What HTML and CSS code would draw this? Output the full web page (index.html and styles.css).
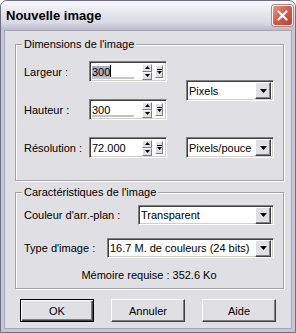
FILE: index.html
```html
<!DOCTYPE html>
<html lang="fr">
<head>
  <meta charset="UTF-8">
  <title>Nouvelle image</title>
  <link rel="stylesheet" href="styles.css">
</head>
<body>
  <div class="window">
    <div class="titlebar">
      <span class="title">Nouvelle image</span>
      <button class="close" aria-label="Fermer">
        <svg width="11" height="11" viewBox="0 0 11 11"><path d="M1.5 1.5 L9.5 9.5 M9.5 1.5 L1.5 9.5" stroke="#fff" stroke-width="2.2" stroke-linecap="round"/></svg>
      </button>
    </div>

    <div class="client">
      <fieldset class="group">
        <legend>Dimensions de l'image</legend>
        <div class="dims">
          <label class="lbl row1">Largeur :</label>
          <div class="spin-field row1">
            <span class="value"><span class="sel">300</span><span class="caret"></span></span>
            <span class="spin">
              <span class="spin-btn"><svg width="5" height="3" viewBox="0 0 5 3"><path d="M2.5 0 L5 3 L0 3 Z"/></svg></span>
              <span class="spin-btn"><svg width="5" height="3" viewBox="0 0 5 3"><path d="M0 0 L5 0 L2.5 3 Z"/></svg></span>
            </span>
            <span class="popup-btn"><svg width="5" height="6" viewBox="0 0 5 6"><path d="M0 0 H5 V1 H0 Z M0 2 H5 L2.5 5 Z"/></svg></span>
            <span class="track"></span>
          </div>

          <label class="lbl row2">Hauteur :</label>
          <div class="spin-field row2">
            <span class="value">300</span>
            <span class="spin">
              <span class="spin-btn"><svg width="5" height="3" viewBox="0 0 5 3"><path d="M2.5 0 L5 3 L0 3 Z"/></svg></span>
              <span class="spin-btn"><svg width="5" height="3" viewBox="0 0 5 3"><path d="M0 0 L5 0 L2.5 3 Z"/></svg></span>
            </span>
            <span class="popup-btn"><svg width="5" height="6" viewBox="0 0 5 6"><path d="M0 0 H5 V1 H0 Z M0 2 H5 L2.5 5 Z"/></svg></span>
            <span class="track"></span>
          </div>

          <div class="combo unit-size">
            <span class="combo-text">Pixels</span>
            <span class="combo-btn"><svg width="7" height="4" viewBox="0 0 7 4"><path d="M0 0 H7 L3.5 4 Z"/></svg></span>
          </div>

          <label class="lbl row3">Résolution :</label>
          <div class="spin-field row3">
            <span class="value">72.000</span>
            <span class="spin">
              <span class="spin-btn"><svg width="5" height="3" viewBox="0 0 5 3"><path d="M2.5 0 L5 3 L0 3 Z"/></svg></span>
              <span class="spin-btn"><svg width="5" height="3" viewBox="0 0 5 3"><path d="M0 0 L5 0 L2.5 3 Z"/></svg></span>
            </span>
            <span class="popup-btn"><svg width="5" height="6" viewBox="0 0 5 6"><path d="M0 0 H5 V1 H0 Z M0 2 H5 L2.5 5 Z"/></svg></span>
          </div>

          <div class="combo unit-res">
            <span class="combo-text">Pixels/pouce</span>
            <span class="combo-btn"><svg width="7" height="4" viewBox="0 0 7 4"><path d="M0 0 H7 L3.5 4 Z"/></svg></span>
          </div>
        </div>
      </fieldset>

      <fieldset class="group group-props">
        <legend>Caractéristiques de l'image</legend>
        <div class="prop-row">
          <label class="lbl">Couleur d'arr.-plan :</label>
          <div class="combo combo-bg">
            <span class="combo-text">Transparent</span>
            <span class="combo-btn"><svg width="7" height="4" viewBox="0 0 7 4"><path d="M0 0 H7 L3.5 4 Z"/></svg></span>
          </div>
        </div>
        <div class="prop-row last">
          <label class="lbl">Type d'image :</label>
          <div class="combo combo-type">
            <span class="combo-text">16.7 M. de couleurs (24 bits)</span>
            <span class="combo-btn"><svg width="7" height="4" viewBox="0 0 7 4"><path d="M0 0 H7 L3.5 4 Z"/></svg></span>
          </div>
        </div>
        <p class="memory">Mémoire requise : 352.6 Ko</p>
      </fieldset>

      <div class="buttons">
        <button class="btn default">OK</button>
        <button class="btn">Annuler</button>
        <button class="btn">Aide</button>
      </div>
    </div>
  </div>
</body>
</html>
```

FILE: styles.css
```css
* {
  margin: 0;
  padding: 0;
  box-sizing: border-box;
}

body {
  width: 296px;
  height: 333px;
  font-family: "Liberation Sans", Arial, sans-serif;
  font-size: 11px;
  color: #000;
  background: #fff;
}

.window {
  width: 296px;
  height: 333px;
  display: flex;
  flex-direction: column;
  background: #c6c6d4;
  border: 1px solid #6e6e84;
  border-radius: 7px 7px 0 0;
  padding: 0 3px 3px;
}

.titlebar {
  height: 29px;
  margin: 0 -3px;
  padding: 0 2px 0 5px;
  display: flex;
  align-items: center;
  justify-content: space-between;
  border-radius: 6px 6px 0 0;
  background: linear-gradient(#f7f7fb, #e9e9f1 35%, #d9d9e5 75%, #b9b9cb);
}

.title {
  font-size: 13px;
  font-weight: bold;
}

.close {
  width: 21px;
  height: 21px;
  display: flex;
  align-items: center;
  justify-content: center;
  border: 1px solid #fff;
  border-radius: 3px;
  background: linear-gradient(135deg, #ec9886, #d85d48 45%, #c23e2c);
  box-shadow: 0 0 0 1px #b7867e;
}

.client {
  flex: 1;
  background: #e0dfe3;
  border: 1px solid #a4a4b4;
  padding: 6px 7px 0 10px;
  display: flex;
  flex-direction: column;
}

.group {
  border: 1px solid #a3a2a8;
  box-shadow: inset 1px 1px 0 #fff, 1px 1px 0 #fff;
  padding: 10px 9px 22px 8px;
}

.group legend {
  margin-left: -2px;
  padding: 0 2px;
  line-height: 14px;
  background: #e0dfe3;
}

.dims {
  display: grid;
  grid-template-columns: 65px 78px 1fr 88px;
  grid-template-rows: 21px 21px 21px;
  row-gap: 17px;
  align-items: center;
}

.lbl {
  white-space: nowrap;
}

.row1 { grid-row: 1; }
.row2 { grid-row: 2; }
.row3 { grid-row: 3; }

.dims .lbl { grid-column: 1; }
.dims .spin-field { grid-column: 2; }

.unit-size {
  grid-column: 4;
  grid-row: 1 / 3;
}

.unit-res {
  grid-column: 4;
  grid-row: 3;
}

.spin-field,
.combo {
  position: relative;
  height: 21px;
  display: flex;
  align-items: center;
  background: #fff;
  border: 1px solid;
  border-color: #808080 #fff #fff #808080;
  box-shadow: inset 1px 1px 0 #404040, inset -1px -1px 0 #d4d0c8;
  padding: 0 2px 0 2px;
}

.value {
  flex: 1;
  display: flex;
  align-items: center;
}

.sel {
  background: #aeb0c6;
}

.caret {
  width: 1px;
  height: 13px;
  background: #000;
}

.spin {
  display: flex;
  flex-direction: column;
  width: 10px;
  margin-right: 3px;
}

.spin-btn,
.popup-btn,
.combo-btn {
  display: flex;
  align-items: center;
  justify-content: center;
  background: #e0dfe3;
  border: 1px solid;
  border-color: #fff #808080 #808080 #fff;
}

.spin-btn {
  height: 8px;
}

.popup-btn {
  width: 8px;
  height: 13px;
  margin-right: 1px;
}

.track {
  position: absolute;
  left: 2px;
  bottom: 2px;
  width: 42px;
  height: 2px;
  background: #c4c4cc;
}

.combo-text {
  flex: 1;
  white-space: nowrap;
  overflow: hidden;
}

.combo-btn {
  width: 16px;
  height: 17px;
  border-color: #fff #404040 #404040 #fff;
  box-shadow: inset -1px -1px 0 #808080;
}

.group-props {
  margin-top: 4px;
  padding: 6px 9px 6px 8px;
}

.prop-row {
  display: flex;
  align-items: center;
  justify-content: space-between;
  height: 20px;
  margin-bottom: 13px;
}

.prop-row.last {
  margin-bottom: 10px;
}

.combo-bg {
  width: 136px;
  height: 20px;
}

.combo-type {
  width: 167px;
  height: 20px;
}

.memory {
  text-align: center;
  line-height: 14px;
}

.buttons {
  display: flex;
  gap: 17px;
  padding: 10px 0 0 5px;
}

.btn {
  width: 74px;
  height: 23px;
  font: inherit;
  color: #000;
  background: #e0dfe3;
  border: 1px solid;
  border-color: #fff #404040 #404040 #fff;
  box-shadow: inset -1px -1px 0 #808080;
}

.btn.default {
  border-color: #000;
  box-shadow: inset 1px 1px 0 #fff, inset -1px -1px 0 #404040, inset -2px -2px 0 #808080;
}
```
